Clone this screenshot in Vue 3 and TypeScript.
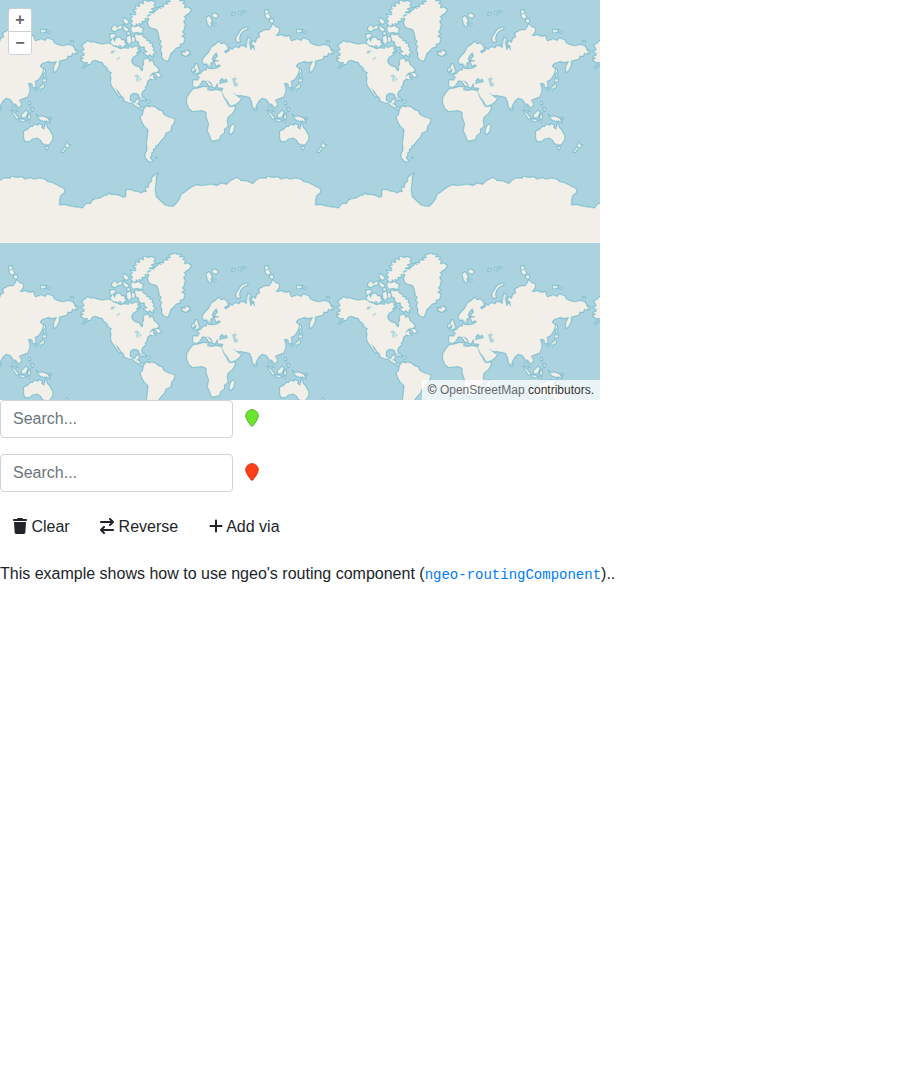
<script setup lang="ts">
import { ref } from 'vue'

const start = ref('')
const destination = ref('')

// Offsets at which the 256px world tile repeats inside the map viewport.
const tiles = [-256, 0, 256, 512].flatMap((x) => [0, 256].map((y) => ({ x, y })))

const antarcticCoast =
  'M0,352 L8,352 20,355 26,346 32,341 44,341 50,331 58,327 72,325 84,318 96,315 100,309 104,314 118,314 132,317 138,322 150,321 150,299 166,300 174,304 186,305 194,310 202,306 212,305 208,291 217,294 220,278 227,276 228,264 234,257 246,250 240,260 240,276 237,298 240,320 252,332 266,345 280,349 292,350 302,340 311,328 315,314 328,306 340,296 354,288 366,284 370,287 392,286 404,283 422,287 438,280 452,284 462,274 478,265 486,264 494,272 514,274 530,282 542,270 552,265 572,265 574,259 588,263 606,261 614,268 632,264 642,268 656,265 672,267 684,276 696,278 712,286 722,291 734,298 732,308 722,316 718,330 718,346 734,344 746,348 768,352'

// Polygons are grouped by the region origin they are plotted from (in thirds of a pixel).
const arctic: string[] = [
  '240,80 247,76 244,71 256,74 252,68 264,70 262,62 278,60 272,54 284,54 280,46 298,40 304,44 314,43 310,52 324,50 320,60 328,60 324,72 334,70 345,76 339,88 330,92 324,98 329,104 322,112 327,122 324,136 318,144 326,150 316,156 326,163 322,178 311,180 314,187 300,192 294,199 284,208 280,220 275,231 265,228 258,220 258,206 254,198 258,188 252,180 257,172 250,164 248,148 242,136 230,133 220,128 215,114 220,106 213,98 225,93 221,86 234,88',
  '172,78 182,76 178,66 192,68 190,57 204,60 202,49 218,53 228,50 238,58 232,64 238,70 225,74 232,82 218,84 226,90 214,94 218,102 206,103 208,110 196,112 199,119 188,118 190,126 180,118 178,128 166,120 171,110 163,106 170,98 164,90 178,94 180,84',
  '104,173 110,162 116,173 120,163 130,160 136,167 148,170 145,176 153,183 145,184 138,192 134,184 124,188 120,184 110,188 103,182',
  '102,152 112,149 119,154 112,161 104,166', '108,131 118,121 122,131 134,124 140,130 132,136 126,134 118,142 108,139',
  '142,122 150,131 158,134 153,144 143,136', '143,101 152,107 159,115 151,120 143,113',
  '167,126 178,130 186,125 201,134 198,148 184,144 171,147 165,137', '152,160 163,153 166,172 160,181 154,176',
  '167,158 176,160 176,173 168,174', '154,144 162,145 160,153 153,151',
  '176,151 190,154 196,150 204,162 210,161 212,171 221,170 220,178 230,180 227,187 234,193 230,199 239,207 230,210 232,219 220,211 216,216 203,207 214,204 206,196 205,187 196,190 188,180 190,174 180,170',
  '180,190 188,193 194,200 186,208 177,203', '318,203 326,206 331,200 340,203 342,210 330,216 320,213',
]
const americas: string[] = [
  '18,135 29,129 34,123 44,127 54,127 70,131 82,133 95,130 104,132 112,139 122,142 134,147 146,144 158,146 161,138 168,145 176,139 188,141 184,148 190,153 181,157 184,163 176,168 169,173 166,184 170,192 178,198 190,202 196,213 201,211 200,200 204,192 202,184 207,176 216,175 221,185 229,181 234,194 242,201 249,211 242,217 229,219 220,230 232,223 232,233 240,236 228,239 224,235 214,243 213,253 207,261 208,266 198,276 196,284 200,295 198,302 191,295 189,284 181,280 169,280 162,287 162,299 168,307 177,308 182,299 191,298 188,307 182,312 190,315 192,324 204,325 206,331 195,328 185,321 177,317 173,311 163,309 145,303 143,293 134,285 128,275 120,266 126,279 134,289 131,291 124,282 118,274 114,266 107,257 104,245 106,235 103,225 107,218 96,211 94,203 84,195 79,187 68,184 58,180 48,183 44,191 36,193 23,204 33,193 36,187 22,187 14,178 23,177 16,169 26,166 24,159 16,154 26,149 22,143',
  '238,220 247,218 256,227 248,232 242,227', '190,292 202,294 213,301 202,299', '211,302 223,302 218,308', '20,201 27,197 25,203', '0,150 6,154 2,160',
]
const southAmerica: string[] = [
  '206,54 215,47 218,52 228,49 238,52 247,60 257,63 264,74 278,82 288,84 296,89 293,100 286,108 284,122 269,129 265,140 254,153 247,162 237,169 239,175 231,177 232,185 226,188 227,195 221,204 230,212 222,216 215,211 209,203 208,192 214,180 212,160 215,140 217,119 205,108 198,95 193,82 200,75 203,60',
]
const oldWorld: string[] = [
  '50,258 52,240 66,241 71,231 63,225 76,220 82,212 92,209 98,194 97,206 109,207 124,205 134,198 130,193 121,198 115,185 130,183 116,180 125,168 121,157 112,168 108,176 111,185 103,190 104,202 96,199 92,190 83,193 79,181 89,167 98,158 106,142 114,137 128,126 136,132 144,130 154,139 156,149 144,153 149,160 160,153 162,144 168,150 177,141 191,144 193,137 203,139 212,143 211,131 216,113 224,117 220,129 224,151 230,141 236,151 234,136 226,134 232,122 238,129 244,114 252,112 249,99 266,91 281,89 288,77 290,72 300,82 310,84 309,95 299,108 316,105 330,110 339,107 346,124 364,117 375,122 383,115 399,120 402,129 412,134 428,138 444,134 458,138 464,149 474,154 468,162 457,159 453,169 444,167 440,177 428,180 417,183 418,193 411,210 403,217 401,202 410,184 398,187 386,184 368,189 359,198 370,207 366,222 356,238 345,244 347,260 339,263 336,250 324,250 329,264 328,278 323,290 310,295 298,300 304,313 298,323 288,313 282,310 285,323 293,334 283,327 278,306 270,297 258,294 248,303 240,317 239,328 230,322 228,307 221,291 209,289 196,286 180,286 172,278 182,288 196,295 190,304 177,314 163,318 155,304 145,291 137,274 142,264 126,263 124,252 140,249 155,246 151,236 143,241 139,234 131,241 132,250 121,253 118,263 110,261 106,249 94,241 108,257 99,258 90,243 78,242 72,254 62,262',
  '52,267 68,265 82,260 96,262 94,270 108,272 120,269 137,274 143,292 153,309 160,321 178,319 176,328 168,341 155,352 153,365 156,379 145,386 144,399 133,407 130,418 118,421 107,423 102,407 94,391 99,373 91,351 91,337 79,331 62,333 50,334 38,323 32,307 33,293 44,276',
  '171,372 176,379 171,397 164,403 160,396 163,382', '59,192 65,194 66,204 71,213 65,219 54,221 62,211 55,204', '48,207 54,202 57,211 49,216',
  '18,155 26,158 31,151 40,155 40,162 29,168 20,164', '91,53 99,48 104,54 108,63 104,69 106,78 101,80 94,69', '107,44 118,40 126,48 120,54 110,50', '113,70 120,72 116,77',
  '168,41 176,38 176,42 169,45', '189,37 194,36 194,44 189,42', '201,33 208,35 204,39',
  '266,32 274,29 278,38 269,42', '267,45 276,40 283,48 278,58 271,53', '282,59 288,56 293,62 289,69 282,66',
  '182,127 180,113 188,101 197,88 215,81 214,88 202,92 193,103 190,114 192,125', '362,88 374,91 379,88 376,96 363,98', '381,92 389,96 388,99 382,97',
  '217,117 223,116 220,131 215,132', '371,206 376,212 372,223 378,229 373,232 370,222', '368,238 377,237 380,242 370,247', '370,249 373,260 363,267 354,265 365,258', '345,263 350,267 347,272',
  '326,305 330,306 330,315 326,312', '333,324 341,326 337,334', '274,330 285,341 296,354 291,357 281,344', '299,357 316,360 310,365 298,361', '305,344 319,331 323,338 317,351 306,354',
  '324,347 331,339 328,346 332,353 325,358', '321,363 329,362 327,368', '350,345 358,351 366,348 378,353 384,356 389,367 380,362 370,363 358,358', '389,353 394,352 391,360',
  '312,394 323,389 331,380 339,380 344,373 354,377 357,371 366,375 364,383 373,388 376,369 382,383 388,390 398,408 397,419 388,433 376,434 367,429 363,421 353,413 338,416 328,424 316,424 311,413',
  '376,440 385,441 382,448 377,446', '436,438 441,426 445,434 452,435 441,443', '424,456 435,442 439,445 429,457', '237,324 242,326 241,331 237,330', '452,124 458,122 460,126',
]
const closePath = (polygons: string[]): string => polygons.map((p) => `M${p}Z`).join('')

const landmasses = [
  { id: 'arctic', transform: 'translate(76 -16) scale(.333333)', d: closePath(arctic) },
  { id: 'americas', transform: 'translate(76 0) scale(.333333)', d: closePath(americas) },
  { id: 'south-america', transform: 'translate(76 90) scale(.333333)', d: closePath(southAmerica) },
  { id: 'old-world', transform: 'translate(176 0) scale(.333333)', d: closePath(oldWorld) },
]
</script>

<template>
  <div class="map">
    <svg class="world" viewBox="0 0 600 400" aria-hidden="true">
      <defs>
        <g id="world-tile">
          <g v-for="land in landmasses" :key="land.id" :transform="land.transform">
            <path class="halo" :d="land.d" />
            <path class="land" :d="land.d" />
          </g>
          <g transform="translate(76 90) scale(.333333)">
            <path class="halo" :d="antarcticCoast" />
            <path class="ice" :d="`${antarcticCoast} L769,352 769,459 0,459Z`" />
            <path class="coast" :d="antarcticCoast" />
            <path class="islet" d="M239,202h4v3h-4z" />
          </g>
          <g transform="translate(76 0) scale(.333333)">
            <path class="lake" d="M105,154l6,-3 6,2-4,6-8,2zM120,178l8,-6 6,1-7,5zM174,229l10,-5 7,5-7,3zM182,232l5,0-2,13-4,-1zM190,232l6,5-4,7z" />
          </g>
          <g transform="translate(176 0) scale(.333333)">
            <path class="lake" d="M168,237l10,-5 4,5-5,3 3,8 4,2 1,9-10,0-2,-10z" />
          </g>
        </g>
      </defs>
      <use v-for="tile in tiles" :key="`${tile.x}:${tile.y}`" href="#world-tile" :x="tile.x" :y="tile.y" />
    </svg>
    <div class="zoom-control">
      <button type="button" aria-label="Zoom in">+</button>
      <button type="button" aria-label="Zoom out">−</button>
    </div>
    <div class="attribution">© <a>OpenStreetMap</a> contributors.</div>
  </div>

  <div class="waypoint">
    <input v-model="start" type="text" placeholder="Search..." />
    <svg class="pin start" viewBox="-20 -20 424 552"><path d="M384 192c0 87.4-117 243-168.3 307.2c-12.3 15.3-35.1 15.3-47.4 0C117 435 0 279.4 0 192C0 86 86 0 192 0S384 86 384 192z" /></svg>
  </div>
  <div class="waypoint">
    <input v-model="destination" type="text" placeholder="Search..." />
    <svg class="pin end" viewBox="-20 -20 424 552"><path d="M384 192c0 87.4-117 243-168.3 307.2c-12.3 15.3-35.1 15.3-47.4 0C117 435 0 279.4 0 192C0 86 86 0 192 0S384 86 384 192z" /></svg>
  </div>

  <div class="actions">
    <button type="button"><svg viewBox="0 0 448 512"><path d="M135.2 17.7L128 32H32C14.3 32 0 46.3 0 64S14.3 96 32 96H416c17.7 0 32-14.3 32-32s-14.3-32-32-32H320l-7.2-14.3C307.4 6.8 296.3 0 284.2 0H163.8c-12.1 0-23.2 6.8-28.6 17.7zM416 128H32L53.2 467c1.6 25.3 22.6 45 47.9 45H346.9c25.3 0 46.3-19.7 47.9-45L416 128z" /></svg> Clear</button>
    <button type="button"><svg viewBox="0 0 448 512"><path d="M438.6 150.6c12.5-12.5 12.5-32.8 0-45.3l-96-96c-12.5-12.5-32.8-12.5-45.3 0s-12.5 32.8 0 45.3L338.7 96 32 96C14.3 96 0 110.3 0 128s14.3 32 32 32l306.7 0-41.4 41.4c-12.5 12.5-12.5 32.8 0 45.3s32.8 12.5 45.3 0l96-96zm-333.3 352c12.5 12.5 32.8 12.5 45.3 0s12.5-32.8 0-45.3L109.3 416 416 416c17.7 0 32-14.3 32-32s-14.3-32-32-32l-306.7 0 41.4-41.4c12.5-12.5 12.5-32.8 0-45.3s-32.8-12.5-45.3 0l-96 96c-12.5 12.5-12.5 32.8 0 45.3l96 96z" /></svg> Reverse</button>
    <button type="button"><svg viewBox="0 0 448 512"><path d="M256 80c0-17.7-14.3-32-32-32s-32 14.3-32 32V224H48c-17.7 0-32 14.3-32 32s14.3 32 32 32H192V432c0 17.7 14.3 32 32 32s32-14.3 32-32V288H400c17.7 0 32-14.3 32-32s-14.3-32-32-32H256V80z" /></svg> Add via</button>
  </div>

  <p class="description">This example shows how to use ngeo's routing component (<a><code>ngeo-routingComponent</code></a>)..</p>
</template>

<style>
body {
  background: #fff;
  color: #212529;
  font: 16px/24px 'Liberation Sans', Arial, sans-serif;
}
</style>

<style scoped>
.map {
  position: relative;
  width: 600px;
  height: 400px;
  overflow: hidden;
  background: #aad3df;
}
.world {
  display: block;
  width: 600px;
  height: 400px;
}
.halo {
  fill: none;
  stroke: #7dbfd0;
  stroke-width: 5.2;
  stroke-linejoin: round;
}
.land {
  fill: #f2efe9;
  stroke: #85c0cf;
  stroke-width: 1;
  stroke-linejoin: round;
}
.ice {
  fill: #f2efe9;
}
.coast {
  fill: none;
  stroke: #8cc4d1;
  stroke-width: 1.5;
}
.lake {
  fill: #aad3df;
  stroke: #b4d7e0;
  stroke-width: 1;
}
.islet {
  fill: #f2efe9;
  stroke: #7bbccc;
  stroke-width: 3;
}
.zoom-control {
  position: absolute;
  top: 8px;
  left: 8px;
  display: flex;
  flex-direction: column;
  gap: 1px;
  box-sizing: border-box;
  width: 24px;
  padding: 1px;
  border-radius: 4px;
  background: #ccd2d4;
}
.zoom-control button {
  height: 22px;
  padding: 0;
  border: 0;
  border-radius: 2px 2px 0 0;
  background: #fff;
  color: #666;
  font: bold 16px/22px 'Liberation Sans', Arial, sans-serif;
}
.zoom-control button:last-child {
  border-radius: 0 0 2px 2px;
}
.attribution {
  position: absolute;
  right: 0;
  bottom: 0;
  box-sizing: border-box;
  height: 20px;
  padding: 0 6px;
  background: rgba(255, 255, 255, 0.75);
  color: #333;
  font-size: 12px;
  line-height: 20px;
  white-space: nowrap;
}
.attribution a {
  color: #696969;
}
.waypoint {
  display: flex;
  align-items: center;
  gap: 12px;
  height: 38px;
  margin-bottom: 16px;
}
.waypoint input {
  box-sizing: border-box;
  width: 233px;
  height: 38px;
  padding: 6px 12px;
  border: 1px solid #ced4da;
  border-radius: 4px;
  background: #fff;
  color: #495057;
  font: inherit;
}
.waypoint input::placeholder {
  color: #6c757d;
  opacity: 1;
}
.pin {
  width: 14px;
  height: 18px;
  margin-top: -2px;
}
.pin path {
  stroke-width: 30;
}
.pin.start path {
  fill: #6be62e;
  stroke: #4cb52b;
}
.pin.end path {
  fill: #ff3e13;
  stroke: #d92f1c;
}
.actions {
  display: flex;
  gap: 4.45px;
  height: 38px;
  margin-bottom: 16px;
  white-space: nowrap;
}
.actions button {
  padding: 6px 12px;
  border: 1px solid transparent;
  background: none;
  color: #212529;
  font: inherit;
}
.actions svg {
  width: 14px;
  height: 16px;
  vertical-align: -2px;
  fill: currentColor;
}
.description {
  margin: 0;
}
.description a {
  color: #007bff;
}
code {
  font-family: 'Liberation Mono', monospace;
  font-size: 14px;
}
</style>
